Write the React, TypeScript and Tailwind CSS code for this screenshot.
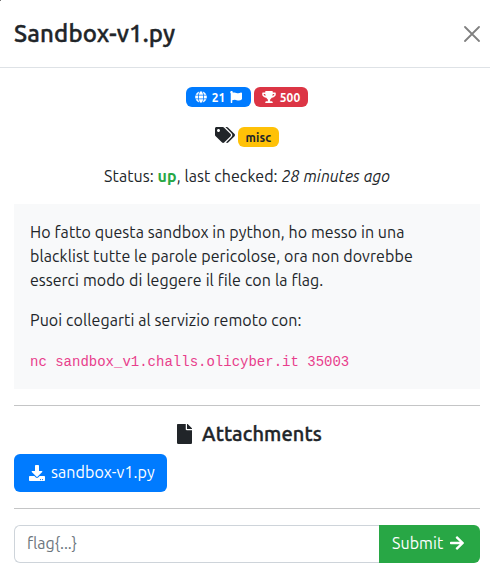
import React from "react";
import { FaGlobe, FaFlag, FaTrophy, FaTags, FaFile, FaDownload, FaArrowRight } from "react-icons/fa";

export default function App() {
  return (
    <div className="relative h-[575px] w-[490px] overflow-hidden bg-white font-[Ubuntu,'Noto_Sans',sans-serif] text-base leading-6 tracking-[0.08px] text-[#212529]">
      <span className="absolute top-0 left-0 size-px bg-[#777777]" />
      <header className="flex h-[68px] items-center justify-between border-b border-[#dee2e6] pr-[10px] pl-[14px]">
        <h5 className="text-2xl leading-9 font-medium tracking-[0.15px] whitespace-nowrap [-webkit-text-stroke:0.4px_#212529]">Sandbox-v1.py</h5>
        <button aria-label="Close" className="text-[#808080]">
          <svg width="16" height="16" viewBox="0 0 16 16" fill="none" stroke="currentColor" strokeWidth="1.8" strokeLinecap="round">
            <path d="M1 1l14 14M15 1L1 15" />
          </svg>
        </button>
      </header>
      <main className="pr-[10px] pl-[14px]">
        <div className="flex justify-center gap-[3px] pt-[19px] text-xs leading-5 font-bold text-white">
          <span className="flex h-5 w-[65px] items-center justify-center rounded-md bg-[#007bff]">
            <FaGlobe className="mr-[5px]" />
            <span className="mr-[5px] pt-px">21</span>
            <FaFlag />
          </span>
          <span className="flex h-5 w-[54px] items-center justify-center rounded-md bg-[#dc3545]">
            <FaTrophy className="mr-1 h-3 w-[14px]" />
            <span className="pt-px">500</span>
          </span>
        </div>
        <div className="mt-5 flex h-5 justify-center gap-[3px]">
          <FaTags className="h-4 w-5" />
          <span className="h-5 w-[41px] rounded-md bg-[#ffc107] pt-px text-center text-xs leading-5 font-bold tracking-[0.15px]">misc</span>
        </div>
        <p className="mt-[17px] text-center whitespace-nowrap">
          Status: <b className="text-[#28a745]">up</b>, last checked: <i>28 minutes ago</i>
        </p>
        <section className="mt-4 h-[185px] bg-[#f8f9fa] p-4 whitespace-nowrap">
          <p>
            <span className="block">Ho fatto questa sandbox in python, ho messo in una</span>
            <span className="block">blacklist tutte le parole pericolose, ora non dovrebbe</span>
            <span className="block tracking-normal [word-spacing:0.45px]">esserci modo di leggere il file con la flag.</span>
          </p>
          <p className="mt-4">Puoi collegarti al servizio remoto con:</p>
          <code className="mt-[18px] block font-['Liberation_Mono',monospace] text-sm leading-6 tracking-normal text-[#e83e8c]">nc sandbox_v1.challs.olicyber.it 35003</code>
        </section>
        <hr className="mt-4 border-t border-[#c4c5c6]" />
        <h5 className="mt-4 flex h-6 items-center justify-center gap-[10px] pl-[5px] text-xl font-medium tracking-[0.12px] [-webkit-text-stroke:0.4px_#212529]">
          <FaFile className="h-5 w-[15px]" />
          <span>Attachments</span>
        </h5>
        <button className="mt-2 flex h-[38px] w-[153px] items-center gap-[6px] rounded-md bg-[#007bff] pl-[15px] whitespace-nowrap text-white">
          <FaDownload className="size-4" />
          <span className="pb-[2px]">sandbox-v1.py</span>
        </button>
        <hr className="mt-4 border-t border-[#c4c5c6]" />
        <form className="mt-4 flex h-[38px]">
          <input placeholder="flag{...}" className="min-w-0 flex-1 rounded-l-md border border-r-0 border-[#ced4da] px-3 pb-[2px] tracking-normal placeholder:text-[#6c757d]" />
          <button type="button" className="flex w-[101px] items-center gap-[7px] rounded-r-md bg-[#28a745] pb-[2px] pl-[13px] text-white">
            <span>Submit</span>
            <FaArrowRight className="h-4 w-[14px]" />
          </button>
        </form>
      </main>
    </div>
  );
}
